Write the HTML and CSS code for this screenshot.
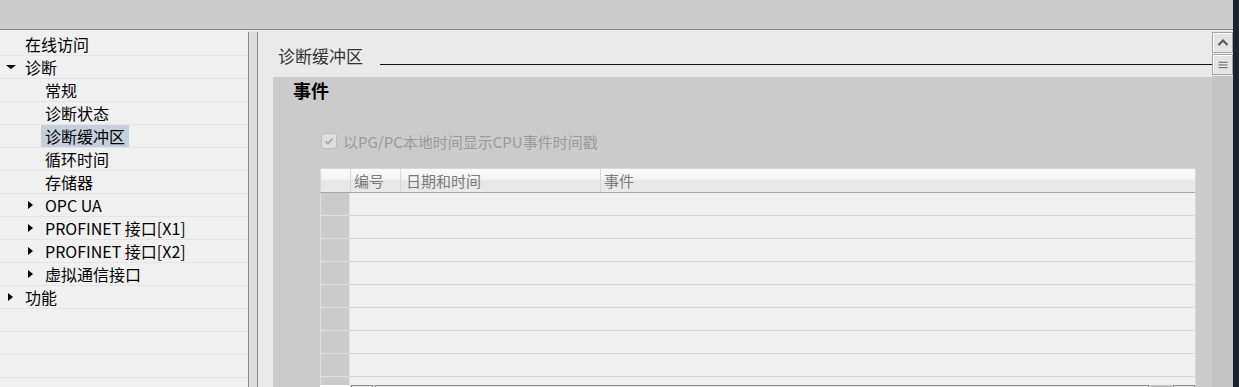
FILE: index.html
```html
<!DOCTYPE html>
<html lang="zh-CN">
  <head>
    <meta charset="UTF-8" />
    <title>诊断缓冲区</title>
    <link rel="stylesheet" href="styles.css">
  </head>

  <body>
    <div class="app">
      <div class="main">
        <div class="topbar"></div>
        <div class="workspace">
          <ul class="tree">
            <li class="tree-row"><span class="toggle"></span>在线访问</li>
            <li class="tree-row"><span class="toggle toggle--open"></span>诊断</li>
            <li class="tree-row tree-row--child"><span class="toggle"></span>常规</li>
            <li class="tree-row tree-row--child"><span class="toggle"></span>诊断状态</li>
            <li class="tree-row tree-row--child"><span class="toggle"></span><span class="tree-label--selected">诊断缓冲区</span></li>
            <li class="tree-row tree-row--child"><span class="toggle"></span>循环时间</li>
            <li class="tree-row tree-row--child"><span class="toggle"></span>存储器</li>
            <li class="tree-row tree-row--child"><span class="toggle toggle--closed"></span>OPC UA</li>
            <li class="tree-row tree-row--child"><span class="toggle toggle--closed"></span>PROFINET 接口[X1]</li>
            <li class="tree-row tree-row--child"><span class="toggle toggle--closed"></span>PROFINET 接口[X2]</li>
            <li class="tree-row tree-row--child"><span class="toggle toggle--closed"></span>虚拟通信接口</li>
            <li class="tree-row"><span class="toggle toggle--closed"></span>功能</li>
            <li class="tree-row"></li>
            <li class="tree-row"></li>
            <li class="tree-row"></li>
            <li class="tree-row"></li>
          </ul>

          <div class="splitter"></div>

          <div class="editor">
            <div class="editor-body">
              <div class="page-title">
                <span>诊断缓冲区</span>
                <span class="title-rule"></span>
              </div>

              <section class="panel">
                <h2 class="panel-heading">事件</h2>

                <label class="option">
                  <span class="checkbox">
                    <svg viewBox="0 0 12 12" class="checkbox-icon">
                      <path d="M2.5 6.2l2.4 2.4 4.6-5" fill="none" stroke="#ababab" stroke-width="2" />
                    </svg>
                  </span>
                  以PG/PC本地时间显示CPU事件时间戳
                </label>

                <div class="grid">
                  <div class="grid-head">
                    <div class="head-cell"></div>
                    <div class="head-cell">编号</div>
                    <div class="head-cell head-cell--wide">日期和时间</div>
                    <div class="head-cell">事件</div>
                  </div>
                  <div class="grid-body">
                    <div class="grid-row"><div class="row-head"></div><div class="row-fill"></div></div>
                    <div class="grid-row"><div class="row-head"></div><div class="row-fill"></div></div>
                    <div class="grid-row"><div class="row-head"></div><div class="row-fill"></div></div>
                    <div class="grid-row"><div class="row-head"></div><div class="row-fill"></div></div>
                    <div class="grid-row"><div class="row-head"></div><div class="row-fill"></div></div>
                    <div class="grid-row"><div class="row-head"></div><div class="row-fill"></div></div>
                    <div class="grid-row"><div class="row-head"></div><div class="row-fill"></div></div>
                    <div class="grid-row"><div class="row-head"></div><div class="row-fill"></div></div>
                    <div class="grid-row"><div class="row-head"></div><div class="row-fill"></div></div>
                  </div>
                  <div class="hscroll">
                    <div class="hs-corner"></div>
                    <div class="hs-btn"></div>
                    <div class="hs-thumb"></div>
                    <div class="hs-track"></div>
                    <div class="hs-btn"></div>
                  </div>
                </div>
              </section>
            </div>

            <div class="vscroll">
              <div class="vs-head">
                <button class="vs-btn">
                  <svg viewBox="0 0 12 8" class="vs-icon">
                    <path d="M1.5 6.5L6 2l4.5 4.5" fill="none" stroke="#555" stroke-width="2" />
                  </svg>
                </button>
                <button class="vs-btn">
                  <svg viewBox="0 0 12 10" class="vs-icon">
                    <path d="M1 2.5h10M1 5.5h10M1 8.5h10" fill="none" stroke="#555" stroke-width="1" />
                  </svg>
                </button>
              </div>
              <div class="vs-track"></div>
            </div>
          </div>
        </div>
      </div>
      <div class="edge"></div>
    </div>
  </body>
</html>
```

FILE: styles.css
```css
/* TIA-style diagnostics view */

* {
  margin: 0;
  padding: 0;
  box-sizing: border-box;
}

body {
  font-family: "Noto Sans CJK SC", "Noto Sans", sans-serif;
  font-size: 15px;
  color: #000;
  background-color: #eaeaea;
  width: 1239px;
  height: 387px;
  overflow: hidden;
}

.app {
  display: flex;
  height: 387px;
}
.main {
  flex: 1;
  min-width: 0;
  display: flex;
  flex-direction: column;
}
.edge {
  width: 6px;
  background-color: #1c2232;
}
.topbar {
  height: 30px;
  flex-shrink: 0;
  background-color: #cccccc;
  border-bottom: 1px solid #858585;
}
.workspace {
  flex: 1;
  min-height: 0;
  display: flex;
}

/* TREE */
.tree {
  width: 248px;
  padding-top: 3px;
  list-style: none;
  background-color: #f0f0f0;
  font-size: 16px;
}
.tree-row {
  height: 23px;
  line-height: 22px;
  padding-left: 6px;
  border-bottom: 1px solid #e4e4e4;
  white-space: nowrap;

  display: flex;
  align-items: center;
}
.tree-row--child {
  padding-left: 26px;
}
.toggle {
  width: 19px;
  height: 22px;
  flex-shrink: 0;

  display: flex;
  align-items: center;
}
.toggle--open::before {
  content: "";
  border-left: 5px solid transparent;
  border-right: 5px solid transparent;
  border-top: 4px solid #000;
}
.toggle--closed::before {
  content: "";
  margin-left: 2px;
  border-top: 4.5px solid transparent;
  border-bottom: 4.5px solid transparent;
  border-left: 5px solid #000;
}
.tree-label--selected {
  background-color: #c5d0dc;
  padding: 0 4px;
  margin-left: -4px;
}

.splitter {
  width: 10px;
  margin-top: 2px;
  background-color: #dcdcdc;
  border-left: 1px solid #8c8c8c;
  border-right: 1px solid #8c8c8c;
}

/* EDITOR */
.editor {
  flex: 1;
  min-width: 0;
  display: flex;
  background-color: #eaeaea;
}
.editor-body {
  flex: 1;
  min-width: 0;
  padding-left: 15px;
  display: flex;
  flex-direction: column;
}
.page-title {
  height: 47px;
  flex-shrink: 0;
  padding: 14px 0 0 5px;
  font-size: 17px;
  line-height: 24px;
  color: #333;

  display: flex;
}
.title-rule {
  flex: 1;
  height: 1px;
  margin: 20px 0 0 17px;
  background-color: #111;
}

.panel {
  flex: 1;
  background-color: #cbcbcb;
  display: flex;
  flex-direction: column;
}
.panel-heading {
  font-size: 18px;
  font-weight: 700;
  line-height: 27px;
  padding-left: 20px;
}
.option {
  height: 16px;
  margin: 29px 0 0 48px;
  color: #9a9a9a;
  font-size: 15px;

  display: flex;
  align-items: center;
  gap: 6px;
}
.checkbox {
  width: 16px;
  height: 16px;
  border: 1px solid #bcbcbc;
  border-radius: 3px;
  background-color: #dedede;

  display: flex;
  align-items: center;
  justify-content: center;
}
.checkbox-icon {
  width: 12px;
  height: 12px;
}

/* GRID */
.grid {
  margin: 19px 16px 0 47px;
  border-right: 1px solid #d6d6d6;
}
.grid-head {
  height: 25px;
  border-top: 1px solid #d6d6d6;
  border-bottom: 1px solid #a8a8a8;
  background: linear-gradient(#f9f9f9, #f3f3f3 50%, #e7e7e7 50%, #e9e9e9);

  display: grid;
  grid-template-columns: 30px 50px 200px 1fr;
}
.head-cell {
  padding-left: 3px;
  line-height: 23px;
  color: #7a7a7a;
  border-left: 1px solid #d8d8d8;
}
.head-cell--wide {
  padding-left: 5px;
}
.grid-body {
  height: 192px;
  overflow: hidden;
}
.grid-row {
  height: 23px;
  display: flex;
}
.row-head {
  width: 30px;
  background-color: #cbcbcb;
  border-left: 1px solid #dedede;
  border-right: 1px solid #dedede;
  border-bottom: 1px solid #dedede;
}
.row-fill {
  flex: 1;
  background-color: #f0f0f0;
  border-bottom: 1px solid #d5d5d5;
}
.hscroll {
  height: 17px;
  display: flex;
  gap: 1px;
  background-color: #d0d0d0;
}
.hs-corner {
  width: 30px;
  border-top: 2px solid #fff;
  background-color: #f0f0f0;
}
.hs-btn {
  width: 22px;
  border: 1px solid #8a8a8a;
  background-color: #e6e6e6;
}
.hs-thumb {
  flex: 1;
  margin-left: 1px;
  border: 1px solid #8a8a8a;
  background-color: #e6e6e6;
}
.hs-track {
  width: 22px;
  border-top: 2px solid #c0c0c0;
}

/* VERTICAL SCROLLBAR */
.vscroll {
  width: 21px;
  display: flex;
  flex-direction: column;
}
.vs-head {
  height: 46px;
  padding-top: 2px;
  background-color: #eaeaea;
}
.vs-btn {
  width: 21px;
  height: 21px;
  margin-bottom: 1px;
  border: 1px solid #a5a5a5;
  box-shadow: inset 1px 1px #fff;
  background-color: #e4e4e4;

  display: flex;
  align-items: center;
  justify-content: center;
}
.vs-icon {
  width: 12px;
  height: 9px;
}
.vs-track {
  flex: 1;
  background-color: #c3c3c3;
}
```
